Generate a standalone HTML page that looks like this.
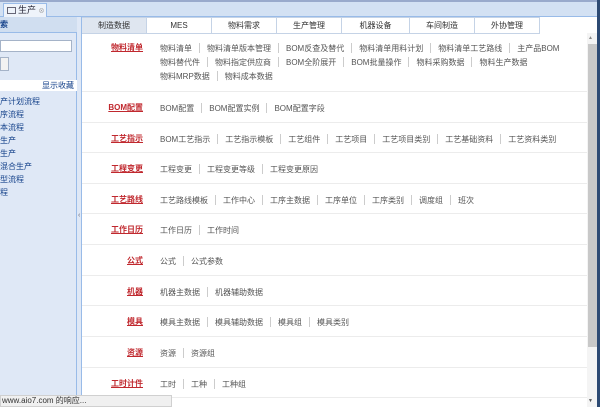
<!DOCTYPE html>
<html><head><meta charset="utf-8"><style>
*{margin:0;padding:0;box-sizing:border-box}
body{width:600px;height:407px;overflow:hidden;background:#fff;font-family:"Liberation Sans","Noto Sans CJK SC",sans-serif;font-size:8px;color:#555;position:relative}
.a{position:absolute}
.top{left:0;top:0;width:600px;height:17px;background:#d3e1f3;border-top:2px solid #99aacc;border-bottom:1px solid #99bbe8}
.tab{left:3px;top:3px;width:44px;height:14px;background:#eef3fa;border:1px solid #99bbe8;border-bottom:none;font-size:9px;color:#223;padding-left:3px;line-height:12px}
.tab i{display:inline-block;width:9px;height:7px;border:1px solid #667;vertical-align:-1px;margin-right:2px}
.left{left:0;top:17px;width:77px;height:390px;background:#dfe8f6;border-right:1px solid #99bbe8}
.split{left:77px;top:17px;width:5px;height:390px;background:#dfe8f6;border-right:1px solid #99bbe8}
.lh{left:0;top:17px;width:77px;height:16px;background:#d0def0;border-bottom:1px solid #99bbe8;font-weight:bold;color:#15428b;font-size:8px;line-height:15px}
.li{left:0;font-size:8px;color:#15428b}
.tabs{left:82px;top:17px;height:17px;display:flex}
.tabs div{width:65px;height:17px;border:1px solid #c5d3e6;border-left:none;text-align:center;line-height:15px;color:#333;background:#fff}
.tabs div.on{background:#dfe6f0}
.sec{left:82px;width:505px;border-bottom:1px solid #ececec}
.lab{position:absolute;right:444px;color:#c0282e;font-weight:bold;text-decoration:underline;white-space:nowrap}
.it{position:absolute;left:78px;width:430px;line-height:14px}
.ln{display:flex;white-space:nowrap}
.it span{white-space:nowrap}
.it span+span:before{content:"";display:inline-block;width:1px;height:10px;background:#ccc;margin:0 7px;vertical-align:-2px}
.sb{left:587px;top:33px;width:10px;height:374px;background:#f4f4f4}
.th{left:588px;top:44px;width:9px;height:303px;background:#c8c8c8}
.rb{left:597px;top:0;width:3px;height:407px;background:#2d4a73}
.st{left:0;top:395px;width:172px;height:12px;background:#f0f0f0;border:1px solid #d0d0d0;color:#333;font-size:8px;line-height:10px;padding-left:1px}
.sec .lab,.sec .it{top:10px}
.sec.f .lab,.sec.f .it{top:8px}
</style></head><body>
<div class="a top"></div>
<div class="a tab"><i></i>生产 <span style="font-size:6px;color:#999">⊗</span></div>
<div class="a left"></div>
<div class="a split"><div style="position:absolute;top:195px;left:1px;font-size:7px;color:#667">‹</div></div>
<div class="a lh">索</div>
<div class="a" style="left:0;top:40px;width:72px;height:12px;background:#fff;border:1px solid #a5b3c8"></div>
<div class="a" style="left:0;top:57px;width:9px;height:14px;background:#f2f2f2;border:1px solid #a5b3c8"></div>
<div class="a" style="left:0;top:80px;width:77px;height:11px;background:#fff;text-align:right;padding-right:3px;color:#15428b;line-height:11px">显示收藏</div>
<div class="a li" style="top:96px">产计划流程</div>
<div class="a li" style="top:109px">序流程</div>
<div class="a li" style="top:122px">本流程</div>
<div class="a li" style="top:135px">生产</div>
<div class="a li" style="top:148px">生产</div>
<div class="a li" style="top:161px">混合生产</div>
<div class="a li" style="top:174px">型流程</div>
<div class="a li" style="top:187px">程</div>
<div class="a tabs"><div class="on">制造数据</div><div>MES</div><div>物料需求</div><div>生产管理</div><div style="width:68px">机器设备</div><div>车间制造</div><div>外协管理</div></div>

<div class="a sec f" style="top:34px;height:58px"><div class="lab">物料清单</div><div class="it"><div class="ln"><span>物料清单</span><span>物料清单版本管理</span><span>BOM反查及替代</span><span>物料清单用料计划</span><span>物料清单工艺路线</span><span>主产品BOM</span></div><div class="ln"><span>物料替代件</span><span>物料指定供应商</span><span>BOM全阶展开</span><span>BOM批量操作</span><span>物料采购数据</span><span>物料生产数据</span></div><div class="ln"><span>物料MRP数据</span><span>物料成本数据</span></div></div></div>
<div class="a sec" style="top:92px;height:31px"><div class="lab">BOM配置</div><div class="it"><div class="ln"><span>BOM配置</span><span>BOM配置实例</span><span>BOM配置字段</span></div></div></div>
<div class="a sec" style="top:123px;height:30px"><div class="lab">工艺指示</div><div class="it"><div class="ln"><span>BOM工艺指示</span><span>工艺指示模板</span><span>工艺组件</span><span>工艺项目</span><span>工艺项目类别</span><span>工艺基础资料</span><span>工艺资料类别</span></div></div></div>
<div class="a sec" style="top:153px;height:31px"><div class="lab">工程变更</div><div class="it"><div class="ln"><span>工程变更</span><span>工程变更等级</span><span>工程变更原因</span></div></div></div>
<div class="a sec" style="top:184px;height:30px"><div class="lab">工艺路线</div><div class="it"><div class="ln"><span>工艺路线模板</span><span>工作中心</span><span>工序主数据</span><span>工序单位</span><span>工序类别</span><span>调度组</span><span>班次</span></div></div></div>
<div class="a sec" style="top:214px;height:31px"><div class="lab">工作日历</div><div class="it"><div class="ln"><span>工作日历</span><span>工作时间</span></div></div></div>
<div class="a sec" style="top:245px;height:31px"><div class="lab">公式</div><div class="it"><div class="ln"><span>公式</span><span>公式参数</span></div></div></div>
<div class="a sec" style="top:276px;height:30px"><div class="lab">机器</div><div class="it"><div class="ln"><span>机器主数据</span><span>机器辅助数据</span></div></div></div>
<div class="a sec" style="top:306px;height:31px"><div class="lab">模具</div><div class="it"><div class="ln"><span>模具主数据</span><span>模具辅助数据</span><span>模具组</span><span>模具类别</span></div></div></div>
<div class="a sec" style="top:337px;height:31px"><div class="lab">资源</div><div class="it"><div class="ln"><span>资源</span><span>资源组</span></div></div></div>
<div class="a sec" style="top:368px;height:30px"><div class="lab">工时计件</div><div class="it"><div class="ln"><span>工时</span><span>工种</span><span>工种组</span></div></div></div>

<div class="a sb"></div><div class="a th"></div>
<div class="a" style="left:588px;top:35px;font-size:5px;color:#888">▲</div>
<div class="a" style="left:588px;top:398px;font-size:5px;color:#555">▼</div>
<div class="a rb"></div>
<div class="a st">www.aio7.com 的响应...</div>
</body></html>
